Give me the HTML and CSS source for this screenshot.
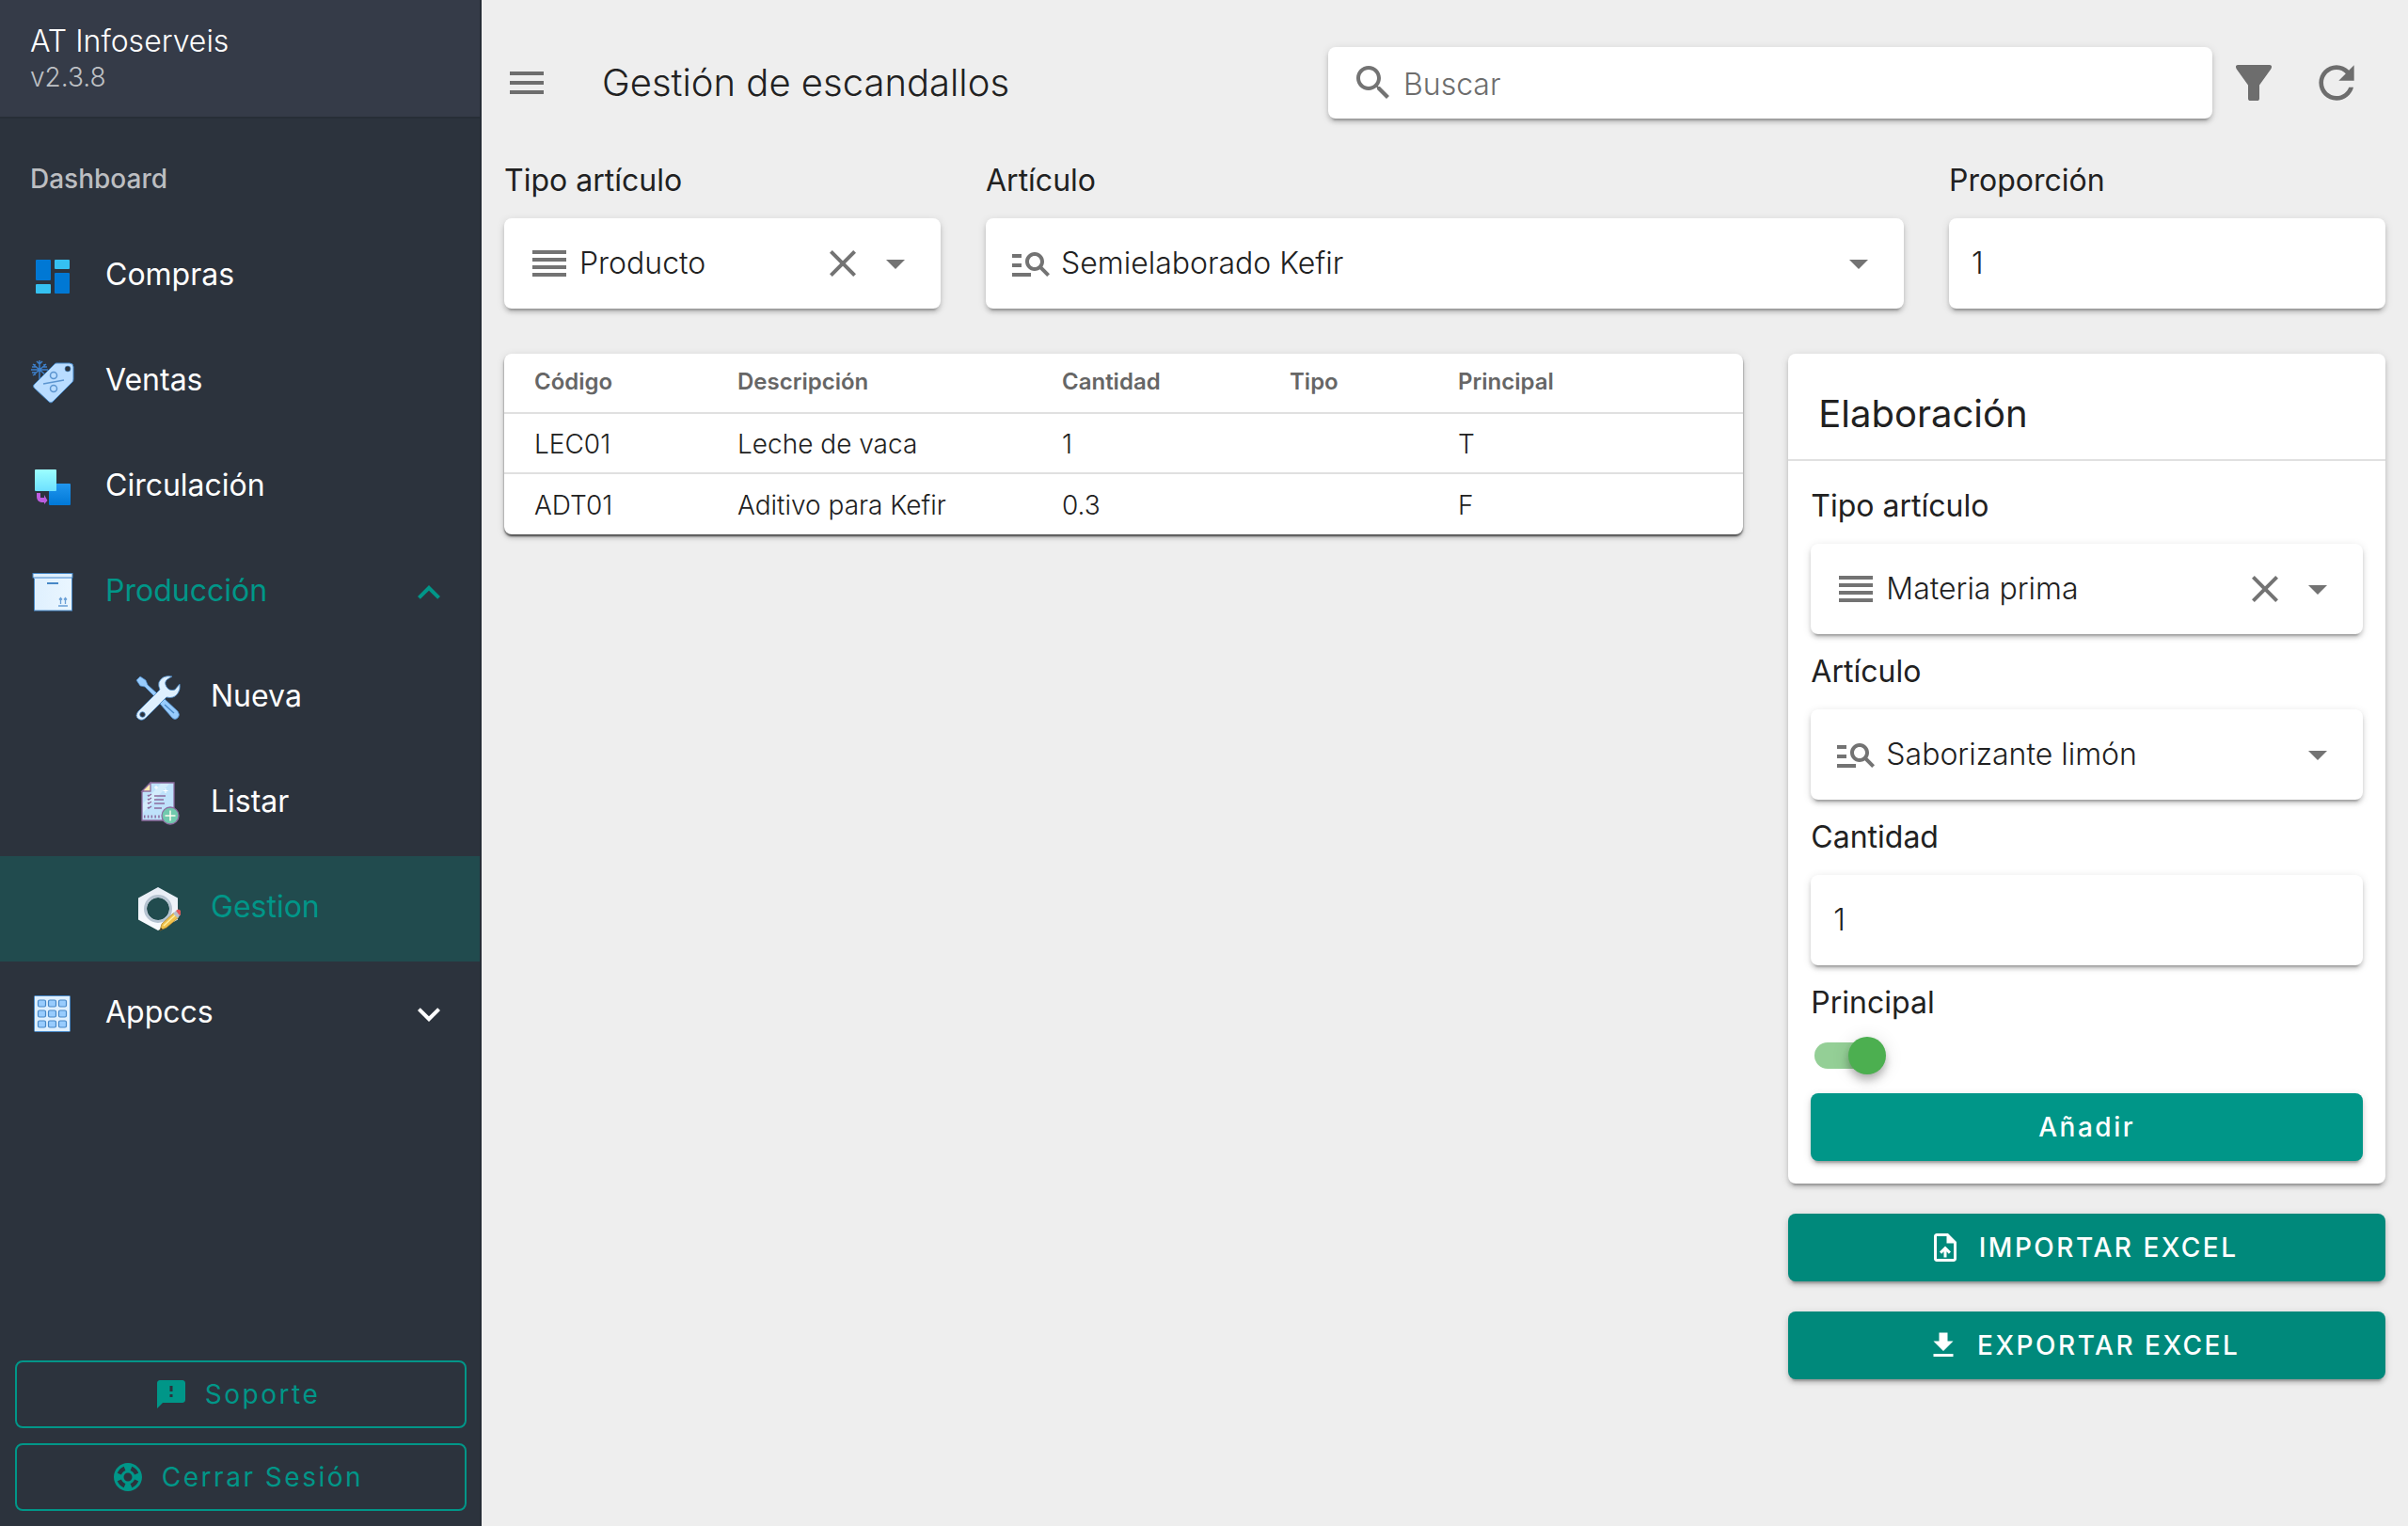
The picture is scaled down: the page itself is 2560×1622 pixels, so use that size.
FILE: index.html
```html
<!DOCTYPE html>
<html lang="es">
<head>
<meta charset="utf-8">
<title>Gestión de escandallos</title>
<meta name="viewport" content="width=device-width, initial-scale=1">
<link rel="stylesheet" href="styles.css">
</head>
<body>
<svg class="sprite" aria-hidden="true">
  <symbol id="i-reorder" viewBox="0 0 24 24"><path d="M3 15h18v-2H3v2zm0 4h18v-2H3v2zm0-8h18V9H3v2zm0-6v2h18V5H3z"/></symbol>
  <symbol id="i-manage" viewBox="0 0 24 24"><path d="M7 9H2V7h5v2zm0 3H2v2h5v-2zm13.590 7l-3.830-3.830c-.8.520-1.740.830-2.760.830-2.760 0-5-2.240-5-5s2.240-5 5-5 5 2.240 5 5c0 1.020-.310 1.960-.830 2.750L22 17.590 20.590 19zM17 11c0-1.650-1.350-3-3-3s-3 1.350-3 3 1.350 3 3 3 3-1.350 3-3zM2 19h10v-2H2v2z"/></symbol>
  <symbol id="i-close" viewBox="0 0 24 24"><path d="M19 6.410L17.590 5 12 10.590 6.410 5 5 6.410 10.590 12 5 17.590 6.410 19 12 13.410 17.590 19 19 17.590 13.410 12z"/></symbol>
  <symbol id="i-down" viewBox="0 0 24 24"><path d="M7 10l5 5 5-5z"/></symbol>
  <symbol id="i-chevron" viewBox="0 0 24 24"><path d="M7.410 8.590L12 13.170l4.590-4.580L18 10l-6 6-6-6z"/></symbol>
</svg>
<div class="app">
  <aside class="sidebar">
    <div class="brand">
      <div class="brand-name">AT Infoserveis</div>
      <div class="brand-version">v2.3.8</div>
    </div>
    <nav class="menu">
      <h2 class="menu-heading">Dashboard</h2>
      <a class="menu-item" href="#compras">
        <svg class="menu-icon" viewBox="0 0 48 48"><g fill="#0078d4"><rect x="6" y="6" width="16" height="22" rx="1"/><rect x="26" y="20" width="16" height="22" rx="1"/></g><g fill="#35c1f1"><rect x="26" y="6" width="16" height="10" rx="1"/><rect x="6" y="32" width="16" height="10" rx="1"/></g></svg>
        <span>Compras</span>
      </a>
      <a class="menu-item" href="#ventas">
        <svg class="menu-icon" viewBox="0 0 48 48"><path d="M10 1v20M1 11h18M3 5l14 12M17 5L3 17M7 2l3 3 3-3M2 8l3 0 0-3M18 8h-3V5M2 14h3v3" fill="none" stroke="#3d7fc9" stroke-width="1.500"/><path d="M4 27L26 5q1-1 2-1h14q4 0 4 4v13q0 2-1 3L24 45q-2 2-4 0L4 30q-1-2 0-3z" fill="#b9dcff" stroke="#4788c7" stroke-width="1"/><circle cx="40" cy="10" r="3" fill="#2c333d" stroke="#4788c7" stroke-width=".6"/><g fill="none" stroke="#5b94cf" stroke-width="1.500"><circle cx="25" cy="17" r="3.500"/><circle cx="25" cy="31" r="3.500"/><path d="M14 26l22-4"/></g></svg>
        <span>Ventas</span>
      </a>
      <a class="menu-item" href="#circulacion">
        <svg class="menu-icon" viewBox="0 0 48 48"><defs><linearGradient id="g-cyan" x2="0" y2="1"><stop stop-color="#9cffff"/><stop offset="1" stop-color="#6de0ff"/></linearGradient><linearGradient id="g-blue" x2="0" y2="1"><stop stop-color="#2196ee"/><stop offset="1" stop-color="#0078d7"/></linearGradient></defs><rect x="20" y="20" width="23" height="23" rx="1" fill="url(#g-blue)"/><rect x="5" y="5" width="23" height="23" rx="1" fill="url(#g-cyan)"/><path d="M7 30h4v5h4v-3l3.500 6-3.500 4v-2h-3q-5-1-5-6z" fill="#bd5de0"/></svg>
        <span>Circulación</span>
      </a>
      <button class="menu-item is-open" type="button" aria-expanded="true">
        <svg class="menu-icon" viewBox="0 0 48 48"><defs><linearGradient id="g-box"><stop stop-color="#dff0fe"/><stop offset="1" stop-color="#eaf6ff"/></linearGradient></defs><rect x="4.500" y="7" width="40" height="36" fill="url(#g-box)" stroke="#4788c7"/><rect x="3" y="3.500" width="42" height="4.500" fill="#dff0fe" stroke="#4788c7"/><path d="M4 8.500h40" stroke="#8bb7e6" stroke-width="1"/><path d="M18 14h12" stroke="#4788c7" stroke-width="2"/><path d="M30 38h10M32.500 36v-6M37.500 36v-6M31 31.500l1.500-2 1.500 2M36 31.500l1.500-2 1.500 2" fill="none" stroke="#6a9fd6" stroke-width="1.300"/></svg>
        <span>Producción</span>
        <svg class="menu-chevron menu-chevron-up"><use href="#i-chevron"/></svg>
      </button>
      <a class="menu-item menu-sub" href="#nueva">
        <svg class="menu-icon" viewBox="0 0 48 48"><path d="M1 5l4-4 6 4 2 5 10 9-3 3L10 12l-5-1z" fill="#98ccfd" stroke="#4788c7" stroke-width=".7"/><path d="M26 30l5-5 14 13q3 4 0 7t-6 0z" fill="#98ccfd" stroke="#4788c7" stroke-width=".7"/><path d="M31 31l10 9" stroke="#4788c7" stroke-width="1.300"/><path d="M39 1q-10-2-14 6-1 4 1 8L3 38q-4 5 0 8 4 3 8-1l22-22q8 2 12-4 3-4 2-10l-5 6q-6 2-9-3t1-8z" fill="#dff0fe" stroke="#4788c7" stroke-width=".8"/><circle cx="7.500" cy="41.500" r="2.800" fill="#2c333d" stroke="#4788c7" stroke-width=".8"/></svg>
        <span>Nueva</span>
      </a>
      <a class="menu-item menu-sub" href="#listar">
        <svg class="menu-icon" viewBox="0 0 48 48"><path d="M16 2h25v40H7V12z" fill="#bfe2fb" stroke="#8d6c9f" stroke-width="1.300"/><path d="M8 24L27 3h9L8 34z" fill="#d3ecfc"/><path d="M7 11l9-9v9z" fill="#ffeeb0" stroke="#8d6c9f" stroke-width="1.300"/><g stroke="#8d6c9f" stroke-width="1.500" fill="none"><path d="M20 16h12M20 20h10M20 24h11M20 29h8"/><path d="M13 15l1 1 3-2M13 19l1 1 3-2M13 23l1 1 3-2M13 28l1 1 3-2"/><path d="M9 38h19" stroke-width="3" stroke-dasharray="1.500 2.300"/></g><path d="M22 5v4M20 7h4M32 8v5M29.500 10.500h5" stroke="#fff"/><circle cx="37" cy="37" r="9" fill="#71c9ae" stroke="#8d6c9f" stroke-width="1.300"/><path d="M37 31.500v11M31.500 37h11" stroke="#fdfcee" stroke-width="1.500"/></svg>
        <span>Listar</span>
      </a>
      <a class="menu-item menu-sub is-active" href="#gestion" aria-current="page">
        <svg class="menu-icon" viewBox="0 0 48 48"><defs><linearGradient id="g-nut" x2="0" y2="1"><stop stop-color="#e6ecf5"/><stop offset="1" stop-color="#fafcff"/></linearGradient></defs><path fill-rule="evenodd" d="M24 1l21 11.500v23L24 47 3 35.500v-23zM24 12a12 12 0 1 0 .1 0z" fill="url(#g-nut)"/><circle cx="24" cy="24" r="13.500" fill="none" stroke="#b5c3d1" stroke-width="3"/><path d="M26 47l2-7 13-12 5 5-13 11z" fill="#f0c14b" stroke="#a87b20" stroke-width=".7"/><path d="M30 42l13-12" stroke="#fff0a0" stroke-width="1.500"/><path d="M40 29l3-3 5 4-3 4z" fill="#b8bfc9"/><path d="M43 26q3-3 5 0 2 3-1 5z" fill="#e3585a"/><path d="M26 47l1-3 2 2z" fill="#33302a"/></svg>
        <span>Gestion</span>
      </a>
      <button class="menu-item" type="button" aria-expanded="false">
        <svg class="menu-icon" viewBox="0 0 48 48"><rect x="4.500" y="4.500" width="38" height="38" rx="1" fill="#dff0fe" stroke="#4788c7"/><g fill="#98ccfd" stroke="#4788c7" stroke-width="1.200"><rect x="8.500" y="9" width="8" height="7" rx="1.500"/><rect x="19.500" y="9" width="8" height="7" rx="1.500"/><rect x="30.500" y="9" width="8" height="7" rx="1.500"/><rect x="8.500" y="20" width="8" height="7" rx="1.500"/><rect x="19.500" y="20" width="8" height="7" rx="1.500"/><rect x="30.500" y="20" width="8" height="7" rx="1.500"/><rect x="8.500" y="31" width="8" height="7" rx="1.500"/><rect x="19.500" y="31" width="8" height="7" rx="1.500"/><rect x="30.500" y="31" width="8" height="7" rx="1.500"/></g></svg>
        <span>Appccs</span>
        <svg class="menu-chevron"><use href="#i-chevron"/></svg>
      </button>
    </nav>
    <div class="sidebar-actions">
      <button class="btn btn-outline" type="button">
        <svg class="btn-icon" viewBox="0 0 24 24"><path d="M20 2H4c-1.100 0-1.990.9-1.990 2L2 22l4-4h14c1.100 0 2-.9 2-2V4c0-1.100-.9-2-2-2zm-7 12h-2v-2h2v2zm0-4h-2V6h2v4z"/></svg>
        Soporte
      </button>
      <button class="btn btn-outline" type="button">
        <svg class="btn-icon" viewBox="0 0 24 24"><path d="M12 2C6.480 2 2 6.480 2 12s4.480 10 10 10 10-4.480 10-10S17.520 2 12 2zm7.460 7.120l-2.780 1.150c-.510-1.360-1.580-2.440-2.950-2.940l1.150-2.780c2.100.8 3.770 2.470 4.580 4.570zM12 15c-1.660 0-3-1.340-3-3s1.340-3 3-3 3 1.340 3 3-1.340 3-3 3zM9.130 4.540l1.170 2.780c-1.380.5-2.470 1.590-2.980 2.970L4.540 9.130c.810-2.110 2.480-3.780 4.590-4.590zM4.540 14.870l2.780-1.150c.510 1.380 1.590 2.460 2.970 2.960l-1.170 2.780c-2.100-.810-3.770-2.480-4.580-4.590zm10.340 4.590l-1.150-2.780c1.370-.510 2.450-1.590 2.950-2.970l2.780 1.170c-.810 2.100-2.480 3.770-4.580 4.580z"/></svg>
        Cerrar Sesión
      </button>
    </div>
  </aside>

  <main class="main">
    <header class="topbar">
      <button class="icon-btn" type="button" aria-label="Menú"><svg class="icon" viewBox="0 0 24 24"><path d="M3 18h18v-2H3v2zm0-5h18v-2H3v2zm0-7v2h18V6H3z"/></svg></button>
      <h1 class="page-title">Gestión de escandallos</h1>
      <div class="search">
        <svg class="icon" viewBox="0 0 24 24"><path d="M15.500 14h-.790l-.280-.270C15.410 12.590 16 11.110 16 9.500 16 5.910 13.090 3 9.500 3S3 5.910 3 9.500 5.910 16 9.500 16c1.610 0 3.090-.590 4.230-1.570l.270.280v.790l5 4.990L20.490 19l-4.990-5zm-6 0C7.010 14 5 11.990 5 9.500S7.010 5 9.500 5 14 7.010 14 9.500 11.990 14 9.500 14z"/></svg>
        <input class="search-input" type="search" placeholder="Buscar" aria-label="Buscar">
      </div>
      <div class="topbar-actions">
        <button class="icon-btn" type="button" aria-label="Filtrar"><svg class="icon" viewBox="0 0 24 24"><path d="M3.600 2.500h16.800q1.300 0 1.100 1.300-.1.500-.4.900L15 13.200v7q0 1.300-1.300 1.300h-3.400Q9 21.500 9 20.200v-7L2.900 4.700q-.3-.4-.4-.9-.2-1.300 1.100-1.300z"/></svg></button>
        <button class="icon-btn" type="button" aria-label="Recargar"><svg class="icon icon-lg" viewBox="0 0 24 24"><path d="M17.650 6.350C16.200 4.900 14.210 4 12 4c-4.420 0-7.990 3.580-7.990 8s3.570 8 7.990 8c3.730 0 6.840-2.550 7.730-6h-2.080c-.820 2.330-3.040 4-5.650 4-3.310 0-6-2.690-6-6s2.690-6 6-6c1.660 0 3.140.690 4.220 1.780L13 11h7V4l-2.350 2.350z"/></svg></button>
      </div>
    </header>

    <div class="grid">
      <div class="field col-3">
        <label for="tipo">Tipo artículo</label>
        <div class="control">
          <svg class="icon"><use href="#i-reorder"/></svg>
          <select id="tipo"><option>Producto</option></select>
          <button class="clear" type="button" aria-label="Quitar"><svg class="icon"><use href="#i-close"/></svg></button>
          <svg class="icon icon-arrow"><use href="#i-down"/></svg>
        </div>
      </div>
      <div class="field col-6">
        <label for="articulo">Artículo</label>
        <div class="control">
          <svg class="icon"><use href="#i-manage"/></svg>
          <select id="articulo"><option>Semielaborado Kefir</option></select>
          <svg class="icon icon-arrow"><use href="#i-down"/></svg>
        </div>
      </div>
      <div class="field col-3">
        <label for="proporcion">Proporción</label>
        <div class="control"><input id="proporcion" type="text" inputmode="decimal" value="1"></div>
      </div>
    </div>

    <div class="grid grid-content">
      <section class="card table-card col-8">
        <table class="table">
          <thead><tr><th class="c-code">Código</th><th class="c-desc">Descripción</th><th class="c-qty">Cantidad</th><th class="c-type">Tipo</th><th>Principal</th></tr></thead>
          <tbody>
            <tr><td>LEC01</td><td>Leche de vaca</td><td>1</td><td></td><td>T</td></tr>
            <tr><td>ADT01</td><td>Aditivo para Kefir</td><td>0.3</td><td></td><td>F</td></tr>
          </tbody>
        </table>
      </section>
      <div class="side col-4">
        <form class="card">
          <h2 class="card-title">Elaboración</h2>
          <div class="card-body">
            <div class="field">
              <label for="e-tipo">Tipo artículo</label>
              <div class="control">
                <svg class="icon"><use href="#i-reorder"/></svg>
                <select id="e-tipo"><option>Materia prima</option></select>
                <button class="clear" type="button" aria-label="Quitar"><svg class="icon"><use href="#i-close"/></svg></button>
                <svg class="icon icon-arrow"><use href="#i-down"/></svg>
              </div>
            </div>
            <div class="field">
              <label for="e-articulo">Artículo</label>
              <div class="control">
                <svg class="icon"><use href="#i-manage"/></svg>
                <select id="e-articulo"><option>Saborizante limón</option></select>
                <svg class="icon icon-arrow"><use href="#i-down"/></svg>
              </div>
            </div>
            <div class="field">
              <label for="e-cantidad">Cantidad</label>
              <div class="control"><input id="e-cantidad" type="text" inputmode="decimal" value="1"></div>
            </div>
            <div class="field field-switch">
              <label for="e-principal">Principal</label>
              <input class="switch" id="e-principal" type="checkbox" role="switch" checked>
            </div>
            <button class="btn btn-primary" type="button">Añadir</button>
          </div>
        </form>
        <button class="btn btn-dark" type="button">
          <svg class="btn-icon" viewBox="0 0 24 24"><path d="M14 2H6c-1.100 0-1.990.9-1.990 2L4 20c0 1.100.890 2 1.990 2H18c1.100 0 2-.9 2-2V8l-6-6zm4 18H6V4h7v5h5v11zM8 15.010l1.410 1.410L11 14.840V19h2v-4.160l1.590 1.590L16 15.010 12.010 11z"/></svg>
          IMPORTAR EXCEL
        </button>
        <button class="btn btn-dark" type="button">
          <svg class="btn-icon" viewBox="0 0 24 24"><path d="M19 9h-4V3H9v6H5l7 7 7-7zM5 18v2h14v-2H5z"/></svg>
          EXPORTAR EXCEL
        </button>
      </div>
    </div>
  </main>
</div>
</body>
</html>
```
FILE: styles.css
```css
:root {
  --text: #212121;
  --muted: #6d6d6d;
  --icon: #737373;
  --teal: #009688;
  --teal-dark: #00897b;
  --shadow: 0 6px 2px -4px rgba(0, 0, 0, .2), 0 4px 4px rgba(0, 0, 0, .14), 0 2px 10px rgba(0, 0, 0, .12);
}

* { box-sizing: border-box; }

body {
  margin: 0;
  background: #eee;
  color: var(--text);
  font-family: Inter, "Liberation Sans", sans-serif;
  font-size: 32px;
  line-height: 48px;
}

h1, h2 { margin: 0; font-weight: 400; }

button, input, select { font: inherit; color: inherit; }

button {
  border: 0;
  padding: 0;
  background: none;
  cursor: pointer;
}

svg { display: block; flex: none; fill: currentColor; }

.sprite { position: absolute; width: 0; height: 0; }

.app { display: flex; min-height: 100vh; }

/* Sidebar */
.sidebar {
  display: flex;
  flex-direction: column;
  flex: 0 0 512px;
  background: #2c333d;
  color: #fff;
  border-right: 2px solid #262d36;
}

.brand {
  padding: 24px 32px;
  background: #353b48;
  border-bottom: 2px solid #272e37;
}

.brand-name { line-height: 40px; font-weight: 300; }

.brand-version {
  font-size: 28px;
  line-height: 36px;
  font-weight: 300;
  color: #bfc1c5;
}

.menu { padding-top: 16px; }

.menu-heading {
  padding: 24px 32px;
  font-size: 28px;
  font-weight: 500;
  color: #bcbec1;
}

.menu-item {
  display: flex;
  align-items: center;
  gap: 32px;
  width: 100%;
  height: 112px;
  padding: 0 30px 0 32px;
  color: #fff;
  text-align: left;
  text-decoration: none;
}

.menu-item span { padding-bottom: 4px; }
.menu-sub { padding-left: 144px; }
.menu-icon { width: 48px; height: 48px; }
.menu-chevron { width: 48px; height: 48px; margin-left: auto; }
.menu-chevron-up { transform: rotate(180deg); }
.is-open { color: var(--teal); }
.is-active { background: #214b4e; color: var(--teal); }

.sidebar-actions {
  display: grid;
  gap: 16px;
  margin-top: auto;
  padding: 16px 14px 16px 16px;
}

/* Buttons */
.btn {
  display: flex;
  align-items: center;
  justify-content: center;
  gap: 18px;
  width: 100%;
  height: 72px;
  border-radius: 8px;
  font-size: 28px;
  font-weight: 500;
  letter-spacing: .09em;
}

.btn-icon { width: 36px; height: 36px; margin-left: -8px; }
.btn-outline { border: 2px solid var(--teal); color: var(--teal); font-weight: 400; }
.btn-primary, .btn-dark { color: #fff; box-shadow: var(--shadow); }
.btn-primary { background: var(--teal); }
.btn-dark { background: var(--teal-dark); }

/* Main area */
.main { flex: 1; min-width: 0; padding: 0 24px 24px; }

.icon { width: 48px; height: 48px; color: var(--icon); }
.icon-lg { width: 56px; height: 56px; }
.icon-btn .icon { color: var(--muted); }

.topbar { display: flex; align-items: center; height: 176px; margin-bottom: -8px; }
.icon-btn { display: flex; justify-content: center; }
.page-title { flex: 1; margin-left: 56px; font-size: 40px; font-weight: 300; }

.search {
  display: flex;
  align-items: center;
  gap: 8px;
  flex: 0 0 47%;
  height: 76px;
  padding: 0 24px;
  background: #fff;
  border-radius: 8px;
  box-shadow: var(--shadow);
}

.search-input {
  flex: 1;
  min-width: 0;
  border: 0;
  padding: 4px 0 0;
  outline: 0;
  background: none;
  font-weight: 300;
}

.search-input::placeholder { color: var(--muted); opacity: 1; }
.topbar-actions { display: flex; align-items: center; gap: 36px; padding: 0 24px 0 20px; }

.grid { display: grid; grid-template-columns: repeat(12, minmax(0, 1fr)); column-gap: 48px; }
.grid-content { margin-top: 48px; align-items: start; }
.col-3 { grid-column: span 3; }
.col-4 { grid-column: span 4; }
.col-6 { grid-column: span 6; }
.col-8 { grid-column: span 8; }

.field { display: grid; grid-template-columns: minmax(0, 1fr); gap: 16px; }
.field label { justify-self: start; }

.control {
  display: flex;
  align-items: center;
  gap: 8px;
  height: 96px;
  padding: 0 24px;
  background: #fff;
  border-radius: 8px;
  box-shadow: var(--shadow);
}

.control select, .control input {
  flex: 1;
  min-width: 0;
  height: 48px;
  padding: 0;
  border: 0;
  outline: 0;
  background: none;
  appearance: none;
  font-weight: 300;
}

/* Cards */
.card { background: #fff; border-radius: 8px; box-shadow: var(--shadow); }
.table-card { box-shadow: 0 2px 2px rgba(0, 0, 0, .5), var(--shadow); }
.card-title { padding: 40px 32px 24px; font-size: 40px; border-bottom: 2px solid #e0e0e0; }
.card-body { display: grid; gap: 16px; padding: 24px; }
.side { display: grid; gap: 32px; }

.field-switch { gap: 12px; padding-bottom: 4px; }

.switch {
  appearance: none;
  position: relative;
  width: 72px;
  height: 28px;
  margin: 6px 4px;
  background: #94cf96;
  border-radius: 14px;
}

.switch::before {
  content: "";
  position: absolute;
  top: -6px;
  right: -4px;
  width: 40px;
  height: 40px;
  border-radius: 50%;
  background: #4caf50;
  box-shadow: 0 4px 8px -2px rgba(0, 0, 0, .2), 0 8px 10px rgba(0, 0, 0, .14), 0 2px 20px rgba(0, 0, 0, .12);
}

/* Table */
.table { width: 100%; table-layout: fixed; border-collapse: separate; border-spacing: 0; }
.table th, .table td { height: 64px; padding: 0 32px; text-align: left; border-bottom: 2px solid #e0e0e0; }
.table th { padding-bottom: 2px; font-size: 24px; font-weight: 600; color: #666; }
.table td { padding-top: 2px; font-size: 28px; font-weight: 300; }
.table tbody tr:last-child td { border-bottom: 0; }
.c-code { width: 216px; }
.c-desc { width: 345px; }
.c-qty { width: 242px; }
.c-type { width: 179px; }
```
